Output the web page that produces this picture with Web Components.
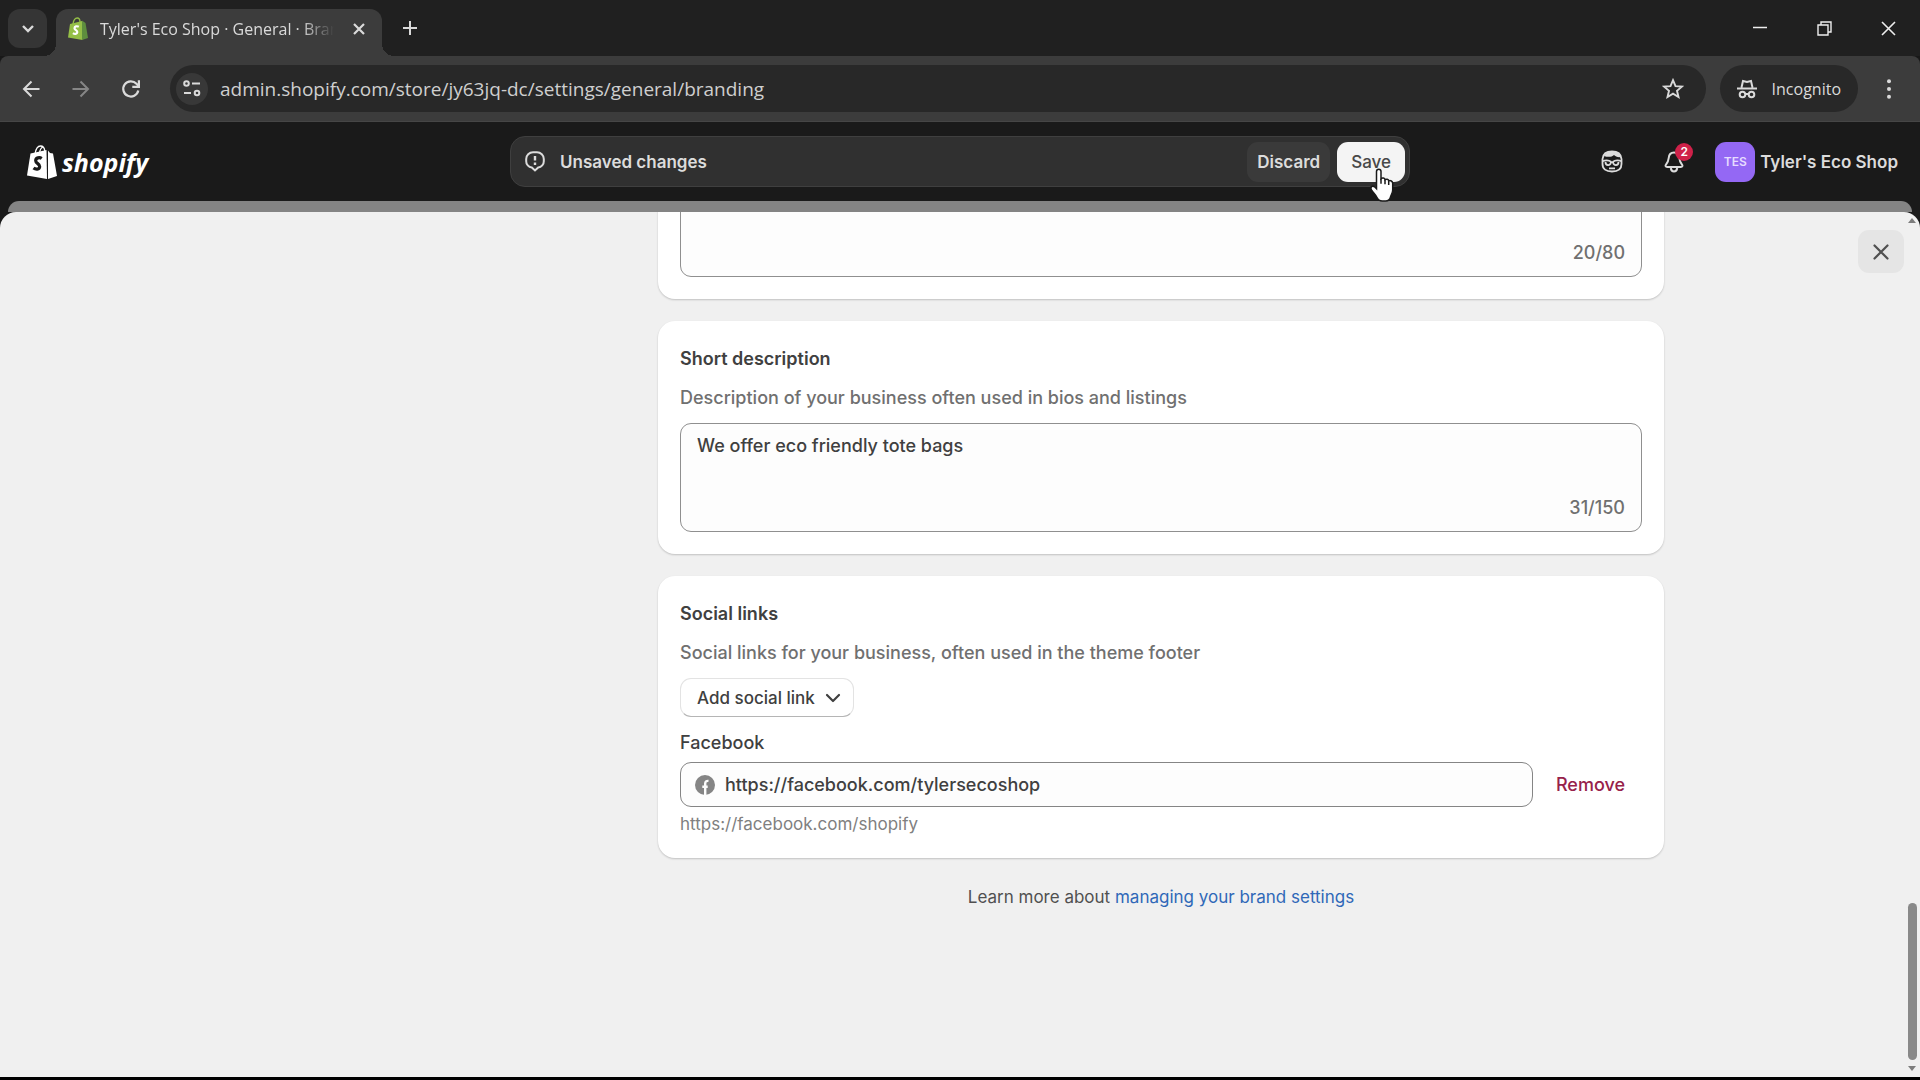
<!DOCTYPE html>
<html lang="en">
<head>
<meta charset="utf-8">
<title>Tyler's Eco Shop · General · Branding</title>
<style>
  html, body { height: 100%; margin: 0; }
  body { background: #000; overflow: hidden; font-family: Inter, "Liberation Sans", sans-serif; }
</style>
</head>
<body>
<browser-window>
  <browser-tab slot="tab">Tyler's Eco Shop · General · Branding</browser-tab>
  <admin-shell>
    <save-bar slot="bar" message="Unsaved changes"></save-bar>
    <store-menu slot="menu" initials="TES" notifications="2">Tyler's Eco Shop</store-menu>

    <settings-card>
      <counted-textarea label="Slogan" count="20/80"></counted-textarea>
    </settings-card>

    <settings-card heading="Short description" description="Description of your business often used in bios and listings">
      <counted-textarea label="Short description" count="31/150">We offer eco friendly tote bags</counted-textarea>
    </settings-card>

    <settings-card heading="Social links" description="Social links for your business, often used in the theme footer">
      <menu-button>Add social link</menu-button>
      <social-link-field label="Facebook" value="https://facebook.com/tylersecoshop" hint="https://facebook.com/shopify"></social-link-field>
    </settings-card>

    <help-footer>Learn more about <a slot="link" href="#brand-settings">managing your brand settings</a></help-footer>
  </admin-shell>
</browser-window>

<script>
const reset = `
  :host, *, *::before, *::after { box-sizing: border-box; }
  button { margin: 0; padding: 0; border: 0; background: none; color: inherit; font: inherit; cursor: pointer; }
  button, .center { display: flex; align-items: center; justify-content: center; }
  svg { display: block; flex: none; }
`;

class BaseElement extends HTMLElement {
  constructor() {
    super();
    this.attachShadow({ mode: "open" });
  }

  connectedCallback() {
    this.shadowRoot.innerHTML = `<style>${reset}${this.styles()}</style>${this.render()}`;
  }

  attr(name) {
    return this.getAttribute(name) || "";
  }
}

class BrowserWindow extends BaseElement {
  styles() {
    return `
      :host { display: flex; flex-direction: column; height: 100vh; padding-bottom: 3px; color: #dadada; }
      .strip { display: flex; height: 56px; padding: 9px 0 0 8px; background: #202020; }
      .search { width: 39px; height: 39px; border-radius: 12px; background: #353535; margin-right: 9px; }
      .new { width: 55px; height: 38px; }
      .controls { display: flex; margin-left: auto; }
      .controls button { width: 64px; height: 38px; }
      .toolbar { display: flex; align-items: center; height: 66px; padding: 0 6px; background: #3c3c3c; border-radius: 8px 8px 0 0; font: 16px "Open Sans", "Noto Sans", sans-serif; border-bottom: 1px solid #464646; }
      .behind { background: #181818; }
      .nav { width: 50px; height: 48px; }
      .nav[disabled] { color: #868686; }
      .omnibox { flex: 1; display: flex; align-items: center; height: 47px; margin-left: 14px; padding: 0 22px 0 6px; border-radius: 24px; background: #282828; }
      .site { width: 32px; height: 32px; border-radius: 50%; background: #383838; margin-right: 12px; }
      .url { flex: 1; min-width: 0; height: 28px; padding: 0; border: 0; outline: 0; background: none; color: #cfcfcf; font: inherit; font-size: 19px; }
      .incognito { gap: 15px; height: 47px; margin-left: 14px; padding: 0 17px; border-radius: 24px; background: #282828; }
      .more { width: 50px; height: 48px; margin-left: 6px; }
      main { flex: 1; min-height: 0; display: flex; }
    `;
  }

  render() {
    return `
      <div class="strip">
        <button class="search" aria-label="Search tabs"><svg width="14" height="10" viewBox="0 0 14 10" fill="none" stroke="currentColor" stroke-width="2.4"><path d="M2 2l5 5 5-5"/></svg></button>
        <slot name="tab"></slot>
        <button class="new" aria-label="New tab"><svg width="16" height="16" viewBox="0 0 16 16" stroke="currentColor" stroke-width="2"><path d="M8 1v14M1 8h14"/></svg></button>
        <div class="controls">
          <button aria-label="Minimize"><svg width="14" height="14" viewBox="0 0 14 14" stroke="#eee" stroke-width="1.5"><path d="M0 6.5h14"/></svg></button>
          <button aria-label="Restore"><svg width="15" height="15" viewBox="0 0 15 15" fill="none" stroke="#eee" stroke-width="1.4"><path d="M1 4h10v10H1zM4 4V1h10v10h-3"/></svg></button>
          <button aria-label="Close window"><svg width="15" height="15" viewBox="0 0 15 15" stroke="#eee" stroke-width="1.6"><path d="M1 1l13 13M14 1L1 14"/></svg></button>
        </div>
      </div>
      <div class="behind">
        <div class="toolbar">
          <button class="nav" aria-label="Back"><svg width="18" height="18" viewBox="0 0 18 18" fill="none" stroke="currentColor" stroke-width="2"><path d="M17.500 9H2M9.500 1.500L2 9l7.500 7.500"/></svg></button>
          <button class="nav" aria-label="Forward" disabled><svg width="18" height="18" viewBox="0 0 18 18" fill="none" stroke="currentColor" stroke-width="2"><path d="M.5 9H16M8.500 1.500L16 9l-7.500 7.500"/></svg></button>
          <button class="nav" aria-label="Reload"><svg width="20" height="20" viewBox="0 0 20 20" fill="none" stroke="currentColor" stroke-width="2.200"><path d="M17.300 11.500A7.600 7.600 0 1 1 15.500 4.800L17.500 7"/><path d="M17.900 1.200v6.600h-6.600"/></svg></button>
          <div class="omnibox">
            <button class="site" aria-label="View site information"><svg width="18" height="17" viewBox="0 0 18 17" fill="none" stroke="currentColor" stroke-width="2"><circle cx="3.500" cy="3.500" r="2.300"/><path d="M9 3.500h8M1 13h7"/><circle cx="14" cy="13" r="2.300"/></svg></button>
            <input class="url" type="text" aria-label="Address" value="admin.shopify.com/store/jy63jq-dc/settings/general/branding">
            <button aria-label="Bookmark this tab"><svg width="22" height="21" viewBox="0 0 22 21" fill="none" stroke="currentColor" stroke-width="1.900"><path d="M11 2.200l2.500 5.900 6.400.5-4.900 4.200 1.500 6.200L11 15.700 5.500 19 7 12.800 2.100 8.600l6.400-.5z"/></svg></button>
          </div>
          <button class="incognito"><svg width="20" height="20" viewBox="0 0 20 20" fill="none" stroke="currentColor" stroke-width="2"><path d="M4.500 8.500L6 2l4 1 4-1 1.500 6.500M0 9.500h20"/><circle cx="5.500" cy="15.500" r="2.800"/><circle cx="14.500" cy="15.500" r="2.800"/><path d="M8.300 15h3.400"/></svg>Incognito</button>
          <button class="more" aria-label="Menu"><svg width="6" height="20" viewBox="0 0 6 20" fill="currentColor"><circle cx="3" cy="2.200" r="2"/><circle cx="3" cy="10" r="2"/><circle cx="3" cy="17.800" r="2"/></svg></button>
        </div>
      </div>
      <main><slot></slot></main>
    `;
  }
}

class BrowserTab extends BaseElement {
  styles() {
    return `
      :host { position: relative; display: flex; align-items: center; gap: 12px; width: 326px; height: 47px; padding: 0 16px 8px 12px; border-radius: 12px 12px 0 0; background: #3c3c3c; font: 16px "Open Sans", "Noto Sans", sans-serif; color: #dadada; }
      /* flared feet on both sides of the tab */
      :host::before, :host::after { content: ""; position: absolute; bottom: 0; width: 12px; height: 12px; }
      :host::before { right: 100%; background: radial-gradient(circle at 0 0, transparent 12px, #3c3c3c 12px); }
      :host::after { left: 100%; background: radial-gradient(circle at 100% 0, transparent 12px, #3c3c3c 12px); }
      .title { flex: 1; min-width: 0; overflow: hidden; white-space: nowrap; -webkit-mask-image: linear-gradient(90deg, #000 86%, transparent); mask-image: linear-gradient(90deg, #000 86%, transparent); }
      button { width: 14px; height: 20px; margin-left: 6px; }
    `;
  }

  render() {
    return `
      <svg width="20" height="23" viewBox="0 0 20 23"><path d="M2 7l12-3 .5 19L0 20.500z" fill="#95bf47"/><path d="M14 3.500L17.500 6 20 21l-6 2z" fill="#5e8e3e"/><path d="M5 7c.6-4 2.500-6 4.200-6S12 3 12 5" fill="none" stroke="#95bf47" stroke-width="1.300"/><path d="M10.800 9.800c-1.700-1-4.300-.6-4.300 1.400 0 2 3 2 2.800 4-.2 2-2.600 2.200-4.400 1" fill="none" stroke="#fff" stroke-width="2.200"/></svg>
      <span class="title"><slot></slot></span>
      <button aria-label="Close tab"><svg width="12" height="12" viewBox="0 0 12 12" stroke="currentColor" stroke-width="2.200"><path d="M1 1l10 10M11 1L1 11"/></svg></button>
    `;
  }
}

class AdminShell extends BaseElement {
  styles() {
    return `
      :host { flex: 1; min-width: 0; display: flex; flex-direction: column; background: #1a1a1a; font-size: 18px; line-height: 28px; }
      header { display: grid; grid-template-columns: 1fr minmax(0, 900px) 1fr; align-items: center; height: 79px; padding: 0 22px; }
      .logo { display: flex; align-items: center; gap: 5px; padding-left: 5px; color: #fff; text-decoration: none; font: italic 700 25px/30px "Open Sans", "Noto Sans", sans-serif; }
      .menu { justify-self: end; }
      .under { height: 11px; margin: 0 8px; border-radius: 14px 14px 0 0; background: #848484; }
      .sheet { position: relative; flex: 1; min-height: 0; display: grid; grid-template-columns: minmax(0, 1fr) 16px; }
      .fill { position: absolute; inset: 0; border-radius: 16px 16px 0 0; background: #f0f0f0; }
      .scroll { position: relative; display: flex; justify-content: center; align-items: flex-end; min-height: 0; overflow: hidden; }
      /* the left column holds the settings navigation on shorter pages */
      .page { flex: 1; max-width: 1424px; display: grid; grid-template-columns: 396px minmax(0, 1fr); column-gap: 22px; padding-bottom: 166px; }
      .cards { grid-column: 2; display: flex; flex-direction: column; gap: 22px; }
      .bar { position: relative; display: flex; flex-direction: column; align-items: center; justify-content: space-between; padding: 6px 0; }
      .track { flex: 1; width: 9px; display: flex; flex-direction: column; justify-content: flex-end; margin: 8px 0 6px; }
      .thumb { height: 19%; border-radius: 5px; background: #898989; }
      .close { position: absolute; top: 18px; right: 16px; width: 46px; height: 43px; border-radius: 11px; background: #e5e5e5; color: #505050; }
    `;
  }

  render() {
    return `
      <header>
        <a class="logo" href="#home">
          <svg width="30" height="34" viewBox="0 0 30 34"><path d="M3.500 8.500L19.500 5l.5 29L0 30.500z" fill="#fff"/><path d="M21 5.500l2 2.500 3 .5L30 31l-9 3z" fill="#fff"/><path d="M8 9c.8-5 3-8 5.500-8S17.500 3 17.800 6M12.500 8c.5-3.500 2-5.500 3.500-6" fill="none" stroke="#fff" stroke-width="1.300"/><path d="M14.700 13.500c-2-1.400-6-.9-6 2.200 0 3 4.300 3 4 6-.3 3-4 3-6.200 1.300" fill="none" stroke="#1a1a1a" stroke-width="3.200"/></svg>
          shopify
        </a>
        <slot name="bar"></slot>
        <div class="menu"><slot name="menu"></slot></div>
      </header>
      <div class="under"></div>
      <div class="sheet">
        <div class="fill"></div>
        <div class="scroll"><div class="page"><div class="cards"><slot></slot></div></div></div>
        <div class="bar" aria-hidden="true">
          <svg width="8" height="5" viewBox="0 0 8 5" fill="#7d7d7d"><path d="M4 0l4 5H0z"/></svg>
          <div class="track"><div class="thumb"></div></div>
          <svg width="8" height="5" viewBox="0 0 8 5" fill="#7d7d7d"><path d="M4 5l4-5H0z"/></svg>
        </div>
        <button class="close" aria-label="Close settings"><svg width="16" height="16" viewBox="0 0 16 16" fill="none" stroke="currentColor" stroke-width="2.200" stroke-linecap="round"><path d="M1.500 1.500l13 13M14.500 1.500l-13 13"/></svg></button>
      </div>
    `;
  }
}

class SaveBar extends BaseElement {
  styles() {
    return `
      :host { display: flex; align-items: center; gap: 7px; height: 51px; padding: 0 4px 0 14px; border: 1px solid #3f3f3f; border-radius: 15px; background: #303030; color: #dcdcdc; font-size: 17px; font-weight: 600; }
      .message { flex: 1; padding-left: 8px; }
      button { height: 40px; border-radius: 11px; background: #3a3a3a; padding: 0 10px; }
      .save { position: relative; padding: 0 14px; background: #f4f4f4; color: #484848; font-weight: 500; }
      .pointer { position: absolute; left: 32px; top: 26px; z-index: 1; }
    `;
  }

  render() {
    return `
      <svg width="20" height="21" viewBox="0 0 20 21" fill="none" stroke="currentColor" stroke-width="2"><path d="M8 1.200h4a6.800 6.800 0 0 1 6.800 6.800v2.200a6.200 6.200 0 0 1-5.600 6.300L10 19.500l-3.200-3A6.200 6.200 0 0 1 1.200 10.200V8A6.800 6.800 0 0 1 8 1.200z"/><path d="M10 5v4.500M10 11.500v2.500" stroke-width="2.400"/></svg>
      <span class="message">${this.attr("message")}</span>
      <button>Discard</button>
      <button class="save">Save
        <svg class="pointer" width="25" height="34" viewBox="0 0 25 34"><path d="M7.500 3.500c0-3 4.500-3 4.500 0v7.200c1.200-1.300 3.700-.9 4 1 1.300-1 3.500-.5 3.700 1.200 1.700-.8 4 .2 4 2.500V22c0 3.300-1.800 4.800-2.200 7-.5 2.700-2 4-5 4h-3.300c-3 0-4.300-1.500-5.200-3.500-1.200-2.700-3.600-4.600-5.500-7.500-1.800-3 1-5 3.300-3l1.700 1.700z" fill="#fff" stroke="#1a1a1a" stroke-width="1.500"/><path d="M12 10.700v5M16 11.700v4.500M19.700 13v4" stroke="#1a1a1a" stroke-width="1.500"/></svg>
      </button>
    `;
  }
}

class StoreMenu extends BaseElement {
  styles() {
    return `
      :host { display: flex; align-items: center; color: #dcdcdc; font-size: 17px; font-weight: 600; }
      .icon { width: 40px; height: 40px; }
      .bell { position: relative; margin: 0 21px 0 22px; }
      .badge { position: absolute; top: 1px; right: 1px; width: 18px; height: 18px; border-radius: 9px; background: #cf2149; color: #fff; font-size: 12px; line-height: 18px; }
      .store { gap: 5px; }
      .avatar { width: 40px; height: 40px; border-radius: 11px; background: #9468f4; color: #e6dcff; font-size: 12px; }
    `;
  }

  render() {
    return `
      <button class="icon" aria-label="Sidekick"><svg width="22" height="23" viewBox="0 0 22 23" fill="none" stroke="currentColor" stroke-width="1.800"><path d="M1.500 9C2 3.800 5.500 1.500 11 1.500S20 3.800 20.500 9v5c0 5-3.500 7.500-9.500 7.500S1.500 19 1.500 14z"/><path d="M3 6C5 2.500 8 1.500 11 1.500c4.500 0 8 1.500 9 5.500-3.500.5-5.500-.5-7-2C11 7 7 7.500 3 6z" fill="currentColor" stroke="none"/><path d="M1.500 11.300c2.500-1.200 6.500-1.200 8.300.4.700.5 1.700.5 2.400 0 1.800-1.600 5.800-1.600 8.300-.4M4.500 12c0 4 4.800 4 5.500.3M17.500 12c0 4-4.800 4-5.500.3M8 18.300h6"/></svg></button>
      <button class="icon bell" aria-label="Notifications"><svg width="20" height="22" viewBox="0 0 20 22" fill="none" stroke="currentColor" stroke-width="2"><path d="M10 1.500c-3.300 0-5 2.500-5.300 5.500-.3 3.500-1.400 4.800-2.700 6.500-.9 1.200-.5 2.500 1.200 2.500h13.600c1.700 0 2.100-1.300 1.200-2.500-1.300-1.700-2.400-3-2.700-6.500-.3-3-2-5.500-5.300-5.500z"/><path d="M6.800 17c.3 2.300 1.500 3.500 3.200 3.500s2.900-1.200 3.200-3.500"/></svg><span class="badge">${this.attr("notifications")}</span></button>
      <button class="store"><span class="avatar center">${this.attr("initials")}</span><slot></slot></button>
    `;
  }
}

class SettingsCard extends BaseElement {
  styles() {
    return `
      :host { display: flex; flex-direction: column; align-items: stretch; gap: 11px; padding: 24px 22px 22px; border-radius: 17px; background: #fff; box-shadow: 0 1px 2px #0003; color: #404040; font-weight: 450; }
      h2, p { margin: 0; font-size: inherit; line-height: inherit; }
      h2 { font-weight: 600; }
      p { color: #707070; }
    `;
  }

  render() {
    const heading = this.attr("heading");
    return `${heading ? `<h2>${heading}</h2><p>${this.attr("description")}</p>` : ""}<slot></slot>`;
  }
}

class CountedTextarea extends BaseElement {
  styles() {
    return `
      :host { display: flex; flex-direction: column; gap: 6px; padding: 8px 16px 9px; border: 1px solid #8f8f8f; border-radius: 11px; background: #fdfdfd; }
      textarea { display: block; width: 100%; padding: 0; border: 0; outline: 0; resize: none; overflow: hidden; background: none; color: inherit; font: inherit; line-height: inherit; }
      .count { text-align: right; color: #707070; }
    `;
  }

  render() {
    return `<textarea rows="2" aria-label="${this.attr("label")}">${this.textContent}</textarea><span class="count">${this.attr("count")}</span>`;
  }
}

class MenuButton extends BaseElement {
  styles() {
    return `
      :host { display: flex; }
      button { gap: 10px; height: 39px; padding: 0 12px 0 16px; border: 1px solid #e3e3e3; border-bottom-color: #b5b5b5; border-radius: 11px; background: #fff; font-size: 17px; font-weight: 550; }
    `;
  }

  render() {
    return `<button aria-haspopup="menu"><slot></slot><svg width="16" height="10" viewBox="0 0 16 10" fill="none" stroke="currentColor" stroke-width="2.200" stroke-linecap="round" stroke-linejoin="round"><path d="M2 2l6 6 6-6"/></svg></button>`;
  }
}

class SocialLinkField extends BaseElement {
  styles() {
    return `
      :host { display: flex; flex-direction: column; gap: 5px; padding-top: 1px; }
      .row { display: flex; gap: 6px; }
      .box { flex: 1; display: flex; align-items: center; gap: 10px; height: 45px; padding: 0 14px; border: 1px solid #858585; border-radius: 11px; background: #fdfdfd; }
      input { flex: 1; min-width: 0; height: 28px; padding: 0; border: 0; outline: 0; background: none; color: inherit; font: inherit; }
      button { padding: 0 17px; color: #97224a; }
      .hint { color: #808080; font-size: 17px; font-weight: 400; line-height: 24px; }
    `;
  }

  render() {
    return `
      <label for="url">${this.attr("label")}</label>
      <div class="row">
        <div class="box">
          <svg width="20" height="20" viewBox="0 0 20 20"><circle cx="10" cy="10" r="10" fill="#858585"/><path d="M10.200 20v-8M7.300 11.800h5.400M10.200 13V8.600c0-2 1.200-2.900 3.300-2.700" fill="none" stroke="#fdfdfd" stroke-width="2.400"/></svg>
          <input id="url" type="url" value="${this.attr("value")}" aria-describedby="hint">
        </div>
        <button>Remove</button>
      </div>
      <span class="hint" id="hint">${this.attr("hint")}</span>
    `;
  }
}

class HelpFooter extends BaseElement {
  styles() {
    return `
      :host { display: block; padding-top: 3px; text-align: center; color: #505050; font-size: 17px; }
      ::slotted(a) { color: #2f68b8; text-decoration: none; }
    `;
  }

  render() {
    return `<slot></slot><slot name="link"></slot>`;
  }
}

customElements.define("browser-window", BrowserWindow);
customElements.define("browser-tab", BrowserTab);
customElements.define("admin-shell", AdminShell);
customElements.define("save-bar", SaveBar);
customElements.define("store-menu", StoreMenu);
customElements.define("settings-card", SettingsCard);
customElements.define("counted-textarea", CountedTextarea);
customElements.define("menu-button", MenuButton);
customElements.define("social-link-field", SocialLinkField);
customElements.define("help-footer", HelpFooter);
</script>
</body>
</html>
